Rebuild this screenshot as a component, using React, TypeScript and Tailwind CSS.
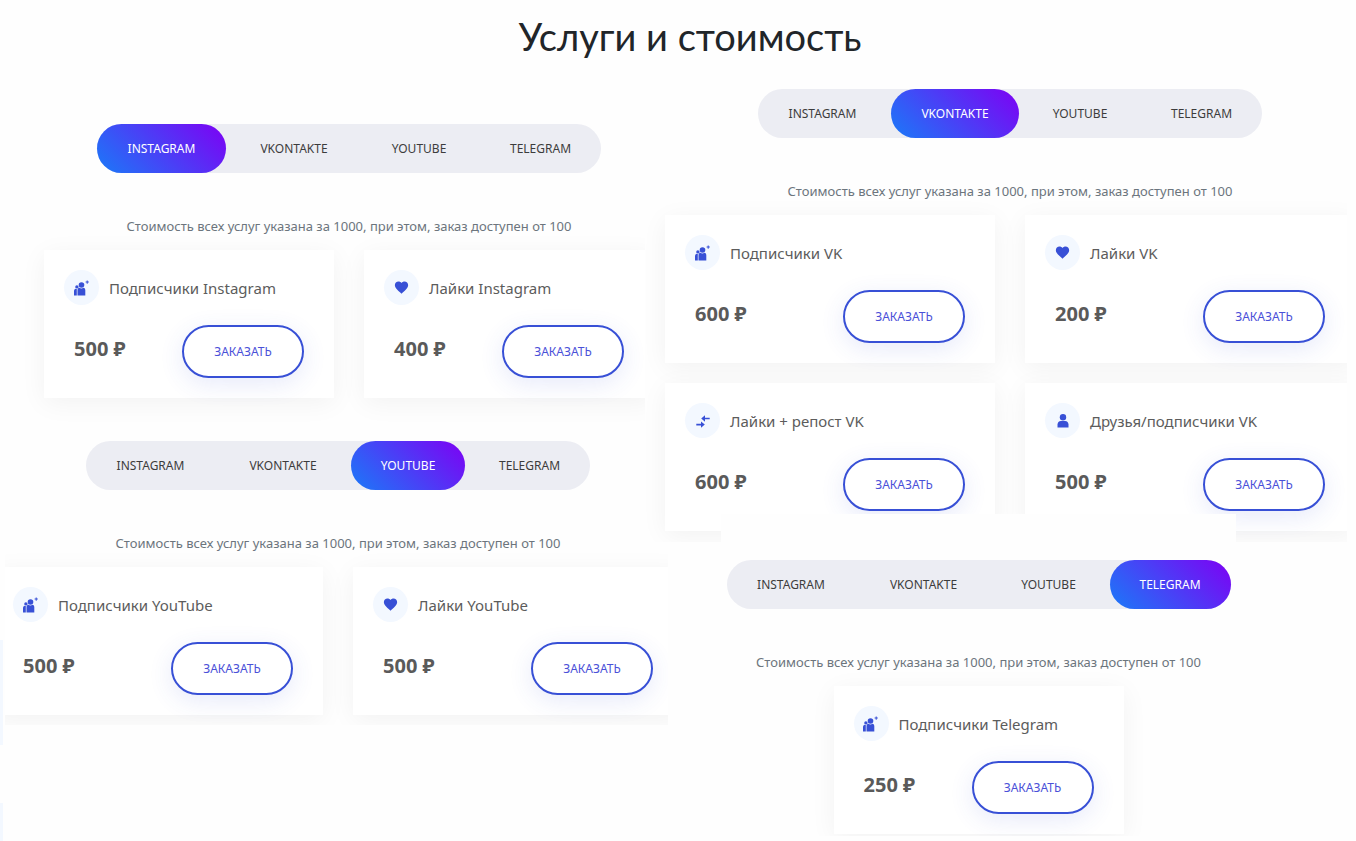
import type { ReactNode } from 'react';

type IconName = 'followers' | 'heart' | 'arrows' | 'person';

type Service = { icon: IconName; title: string; price: string };

const NETWORKS = [
  { name: 'INSTAGRAM', width: 'w-[129px]' },
  { name: 'VKONTAKTE', width: 'w-[128px]' },
  { name: 'YOUTUBE', width: 'w-[114px]' },
  { name: 'TELEGRAM', width: 'w-[121px]' },
];

const ICONS: Record<IconName, ReactNode> = {
  followers: (
    <>
      <circle cx="7.5" cy="5" r="2.8" />
      <path d="M3.500 15.500V10.200c0-1.300.7-2.200 1.900-2.400.6.500 1.200.7 2 .7s1.400-.2 2-.7c1.200.2 1.900 1.100 1.900 2.400v5.300z" />
      <circle cx="2.900" cy="6.900" r="1.700" />
      <path d="M0 15.500v-4.300C0 10 .5 9.200 1.300 8.700c.5.300 1 .4 1.500.3v6.500z" />
      <path d="M12.700.5h1v1.100h1.100v1h-1.100v1.100h-1V2.600h-1.100v-1h1.100z" />
    </>
  ),
  heart: (
    <path
      transform="translate(-.5 -.5) scale(.6667)"
      d="m12 21.350-1.450-1.320C5.400 15.360 2 12.280 2 8.500 2 5.420 4.420 3 7.500 3c1.740 0 3.410.810 4.500 2.090C13.090 3.810 14.760 3 16.500 3 19.580 3 22 5.420 22 8.500c0 3.780-3.400 6.860-8.550 11.540L12 21.350z"
    />
  ),
  arrows: (
    <path d="M1.300 10.800h4.700V8.400l3.800 3.200-3.800 3.200v-2.400H1.300zM14.700 4.700H10V2.300L6.200 5.500 10 8.700V6.300h4.700z" />
  ),
  person: (
    <>
      <circle cx="8" cy="4.300" r="3.200" />
      <path d="M2.500 14.500v-2.900c0-2.100 1.400-3.600 3.400-3.600h4.200c2 0 3.400 1.500 3.400 3.600v2.900z" />
    </>
  ),
};

function Tabs({ active }: { active: string }) {
  return (
    <nav className="mx-auto flex h-[49px] w-fit gap-1 rounded-full bg-[#ecedf3]">
      {NETWORKS.map(({ name, width }) => (
        <button
          key={name}
          type="button"
          className={`${width} h-full shrink-0 rounded-full text-center text-xs ${
            name === active
              ? 'bg-[linear-gradient(45deg,#1a7af8,#7e00f4)] text-white'
              : 'text-[#3c3c3c]'
          }`}
        >
          {name}
        </button>
      ))}
    </nav>
  );
}

function Card({ icon, title, price }: Service) {
  return (
    <article className="flex h-[148px] min-w-0 flex-col bg-white px-5 pt-5 shadow-[0_5px_25px_rgba(0,0,0,0.05)]">
      <div className="flex items-center gap-[10px]">
        <span className="flex size-[35px] shrink-0 items-center justify-center rounded-full bg-[#f3f8ff]">
          <svg viewBox="0 0 16 16" className="size-4 fill-[#3850d6]" aria-hidden="true">
            {ICONS[icon]}
          </svg>
        </span>
        <h3 className="pt-px text-[15px] leading-6 whitespace-nowrap text-[#5c5c5c]">{title}</h3>
      </div>
      <div className="mt-5 flex items-center justify-between px-[10px]">
        <span className="pb-1.5 text-xl leading-7 font-bold whitespace-nowrap text-[#5a5a5a]">{price} ₽</span>
        <button
          type="button"
          className="h-[53px] w-[122px] shrink-0 rounded-full border-2 border-[#3850d6] bg-white text-center text-xs text-[#4a50d8] shadow-[0_6px_24px_rgba(56,80,214,0.12)]"
        >
          ЗАКАЗАТЬ
        </button>
      </div>
    </article>
  );
}

function Pricing({ active, services }: { active: string; services: Service[] }) {
  return (
    <>
      <Tabs active={active} />
      <p className="mt-[41px] text-center text-[13px] leading-6 whitespace-nowrap text-[#6c757d]">
        Стоимость всех услуг указана за 1000, при этом, заказ доступен от 100
      </p>
      <div
        className={
          services.length > 1
            ? 'mt-3 grid grid-cols-2 gap-x-[30px] gap-y-5'
            : 'mx-auto mt-3 grid w-[290px] grid-cols-1'
        }
      >
        {services.map((service) => (
          <Card key={service.title} {...service} />
        ))}
      </div>
    </>
  );
}

export default function App() {
  return (
    <main className="relative min-h-screen overflow-x-clip bg-[#fefefe] font-['Noto_Sans','Open_Sans',sans-serif]">
      <h1 className="flex h-[89px] items-start justify-center pt-2 pl-6 font-['Lato','Noto_Sans',sans-serif] text-[38px] leading-[56px] text-[#212529]">
        Услуги и стоимость
      </h1>

      <div className="grid grid-cols-[656fr_700fr]">
        <div className="min-w-0 pt-[35px]">
          <section className="mr-[11px] overflow-x-clip pl-11">
            <div className="-mr-[9px]">
              <Pricing
                active="INSTAGRAM"
                services={[
                  { icon: 'followers', title: 'Подписчики Instagram', price: '500' },
                  { icon: 'heart', title: 'Лайки Instagram', price: '400' },
                ]}
              />
            </div>
          </section>

          <section className="mt-[43px] -mr-3 ml-[5px] overflow-clip pb-[10px]">
            <div className="-mr-[15px] -ml-3">
              <Pricing
                active="YOUTUBE"
                services={[
                  { icon: 'followers', title: 'Подписчики YouTube', price: '500' },
                  { icon: 'heart', title: 'Лайки YouTube', price: '500' },
                ]}
              />
            </div>
          </section>
        </div>

        <div className="min-w-0">
          <section className="mr-[9px] -ml-[11px] overflow-clip pb-[11px] pl-5">
            <div className="-mr-2">
              <Pricing
                active="VKONTAKTE"
                services={[
                  { icon: 'followers', title: 'Подписчики VK', price: '600' },
                  { icon: 'heart', title: 'Лайки VK', price: '200' },
                  { icon: 'arrows', title: 'Лайки + репост VK', price: '600' },
                  { icon: 'person', title: 'Друзья/подписчики VK', price: '500' },
                ]}
              />
            </div>
          </section>

          <section className="relative -mt-7 ml-[65px] max-w-[515px] overflow-clip bg-[#fefefe] pt-[46px] pb-[2px]">
            <Pricing
              active="TELEGRAM"
              services={[{ icon: 'followers', title: 'Подписчики Telegram', price: '250' }]}
            />
          </section>
        </div>
      </div>

      <div className="absolute top-[640px] left-0 h-[105px] w-[3px] bg-[#f3f8ff]" />
      <div className="absolute top-[803px] bottom-0 left-0 w-[3px] bg-[#f3f8ff]" />
    </main>
  );
}
